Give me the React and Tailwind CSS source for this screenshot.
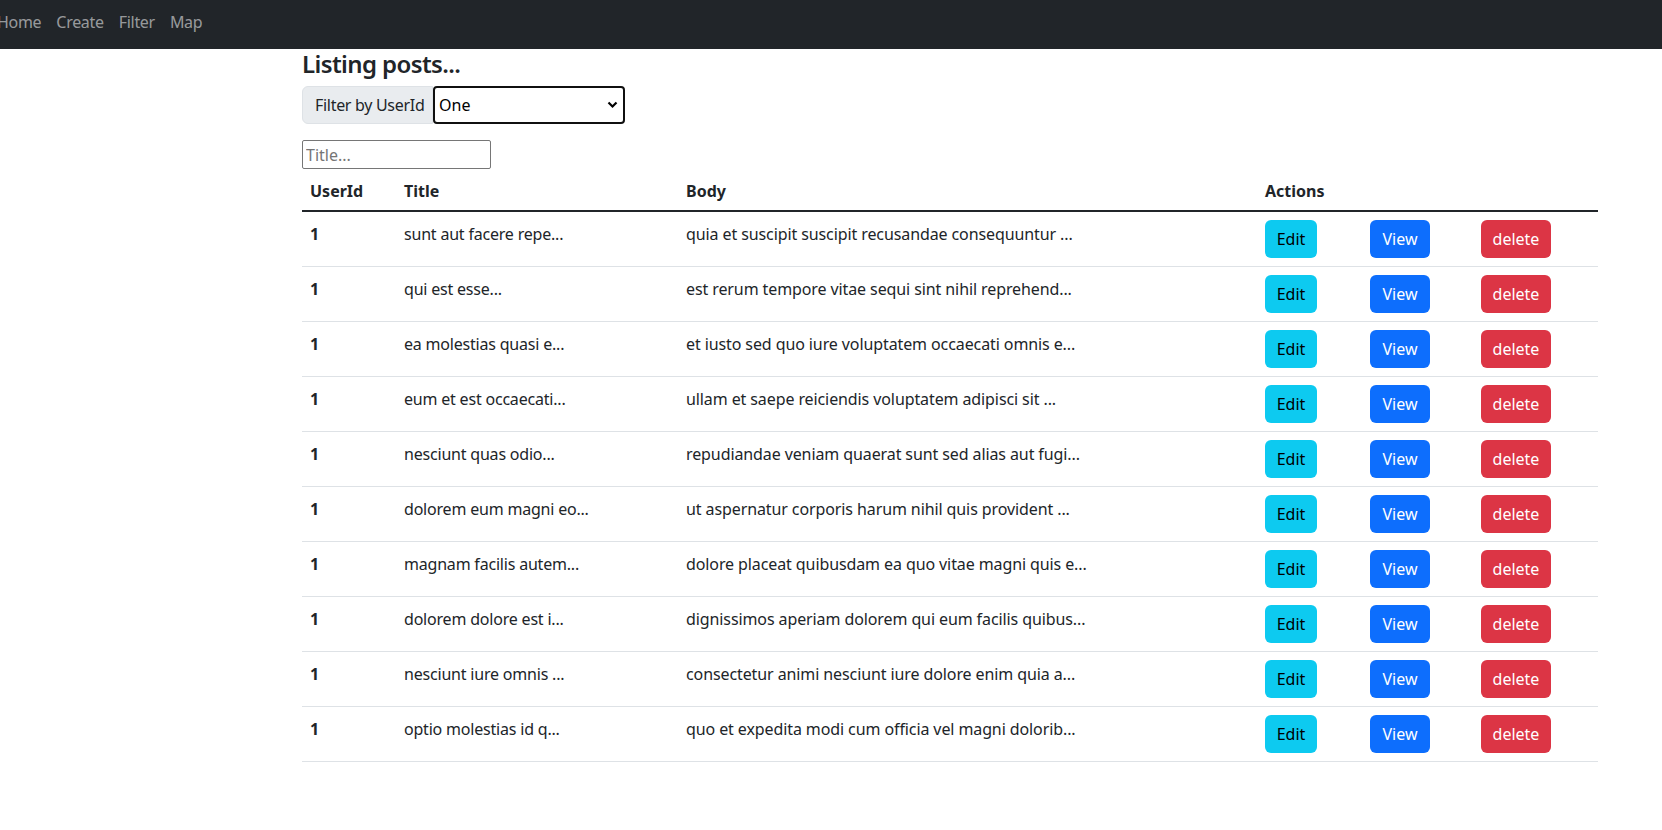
import React from 'react'

const posts = [
    ['sunt aut facere repe...', 'quia et suscipit suscipit recusandae consequuntur ...'],
    ['qui est esse...', 'est rerum tempore vitae sequi sint nihil reprehend...'],
    ['ea molestias quasi e...', 'et iusto sed quo iure voluptatem occaecati omnis e...'],
    ['eum et est occaecati...', 'ullam et saepe reiciendis voluptatem adipisci sit ...'],
    ['nesciunt quas odio...', 'repudiandae veniam quaerat sunt sed alias aut fugi...'],
    ['dolorem eum magni eo...', 'ut aspernatur corporis harum nihil quis provident ...'],
    ['magnam facilis autem...', 'dolore placeat quibusdam ea quo vitae magni quis e...'],
    ['dolorem dolore est i...', 'dignissimos aperiam dolorem qui eum facilis quibus...'],
    ['nesciunt iure omnis ...', 'consectetur animi nesciunt iure dolore enim quia a...'],
    ['optio molestias id q...', 'quo et expedita modi cum officia vel magni dolorib...'],
]

const App = () => {
    return (
        <div className="min-h-[830px] bg-white text-[#212529]" style={{ fontFamily: '"Noto Sans", "Open Sans", sans-serif' }}>
            <nav className="bg-[#212529] h-[49px] flex items-center pb-[5px]">
                <ul className="flex gap-[15px] ml-[-3px] text-[16px] tracking-[-0.3px] text-[#ffffff8c]">
                    <li><a href="#home">Home</a></li>
                    <li><a href="#create">Create</a></li>
                    <li><a href="#filter">Filter</a></li>
                    <li><a href="#map">Map</a></li>
                </ul>
            </nav>
            <div className="ml-[302px] w-[1296px]">
                <h4 className="text-[24px] leading-[29px] font-semibold tracking-[-0.6px] mb-2">Listing posts...</h4>
                <div className="flex h-[38px] mb-4">
                    <span className="flex items-center px-3 bg-[#e9ecef] border border-[#dee2e6] rounded-l-[6px] text-[16px] tracking-[-0.3px] whitespace-nowrap w-[131px]">
                        Filter by UserId
                    </span>
                    <div className="relative w-[192px] h-[38px] border-2 border-[#101010] rounded-[4px] flex items-center pl-[4px]">
                        <span className="text-[16px] text-black">One</span>
                        <svg className="absolute right-[5px] top-[13px]" width="11" height="8" viewBox="0 0 11 8">
                            <path d="M1.5 1.5 L5.5 5.5 L9.5 1.5" fill="none" stroke="#000" strokeWidth="2.2" />
                        </svg>
                    </div>
                </div>
                <input
                    className="block w-[189px] h-[29px] border border-[#767676] rounded-[2px] px-[3px] text-[16px] placeholder:text-[#757575]"
                    placeholder="Title..."
                />
                <table className="w-full mt-[2px] border-collapse text-[16px]">
                    <thead>
                        <tr className="border-b-2 border-[#212529] h-[40px] text-left">
                            <th className="px-2 font-bold w-[94px]">UserId</th>
                            <th className="px-2 font-bold w-[282px]">Title</th>
                            <th className="px-2 font-bold w-[579px]">Body</th>
                            <th className="px-2 font-bold" colSpan={3}>Actions</th>
                        </tr>
                    </thead>
                    <tbody>
                        {posts.map(([title, body], i) => (
                            <tr key={i} className="border-b border-[#dee2e6] h-[55px]">
                                <td className="px-2 font-bold align-top pt-[10px]">1</td>
                                <td className="px-2 align-top pt-[10px] tracking-[-0.2px]">{title}</td>
                                <td className="px-2 align-top pt-[10px] tracking-[-0.1px]">{body}</td>
                                <td className="px-2 w-[105px]">
                                    <button className="bg-[#0dcaf0] text-black rounded-[6px] h-[38px] w-[52px]">Edit</button>
                                </td>
                                <td className="px-2 w-[111px]">
                                    <button className="bg-[#0d6efd] text-white rounded-[6px] h-[38px] w-[60px]">View</button>
                                </td>
                                <td className="px-2">
                                    <button className="bg-[#dc3545] text-white rounded-[6px] h-[38px] w-[70px]">delete</button>
                                </td>
                            </tr>
                        ))}
                    </tbody>
                </table>
            </div>
        </div>
    )
}

export default App
